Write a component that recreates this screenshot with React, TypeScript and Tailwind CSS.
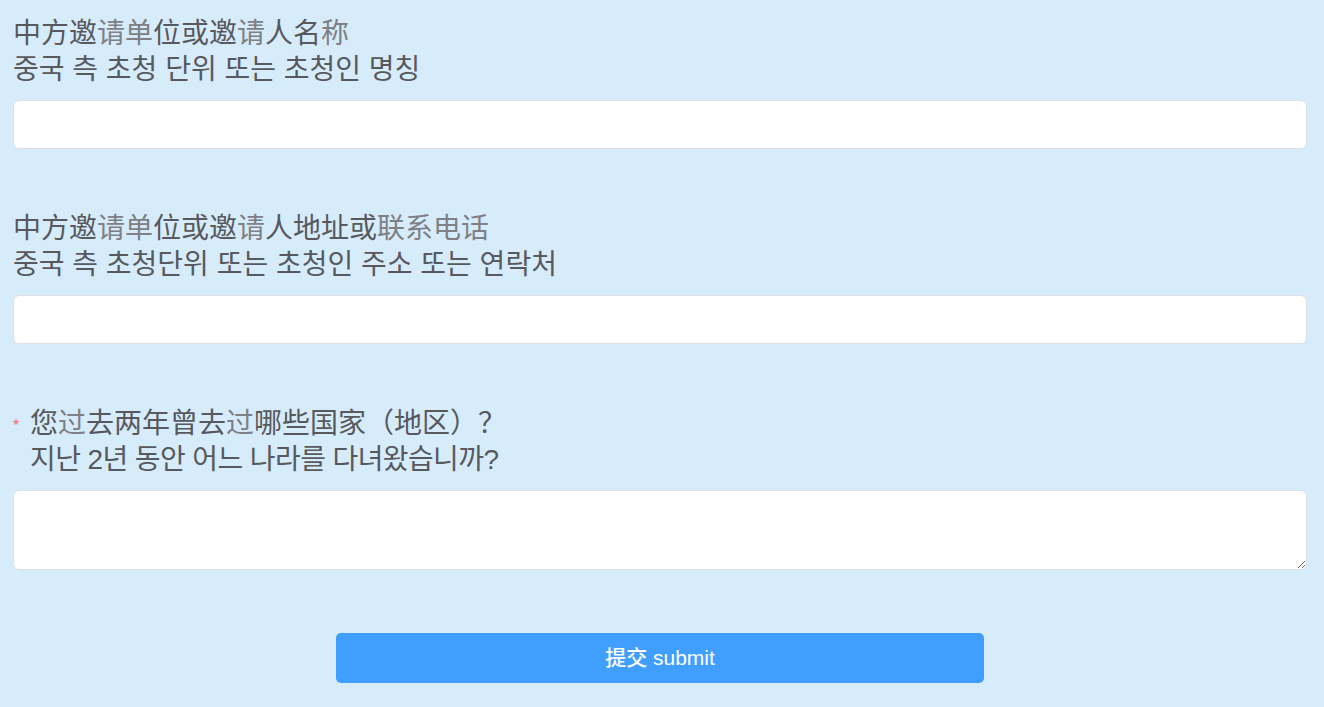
import React from 'react'

const FONT = '"Liberation Sans", "Noto Sans CJK SC", "Noto Sans CJK KR", sans-serif'

// lighter characters in the reference render with a thinner fallback face
function L({ children }: { children: React.ReactNode }) {
  return <span className="text-[#7e8085]">{children}</span>
}

function Field({
  zh,
  ko,
  required,
  multiline,
}: {
  zh: React.ReactNode
  ko: string
  required?: boolean
  multiline?: boolean
}) {
  return (
    <div className="flex flex-col">
      <div className="flex">
        {required && (
          <span className="w-[17px] shrink-0 text-[#f56c6c] text-[16px] leading-[36px] pt-[2px]">*</span>
        )}
        <div className="flex flex-col text-[#58595e] text-[28px] leading-[36px]">
          <div>{zh}</div>
          <div className={required ? 'tracking-[-0.6px]' : ''}>{ko}</div>
        </div>
      </div>
      {multiline ? (
        <textarea className="mt-3 h-[80px] w-full bg-white border border-[#dcdfe6] rounded-[6px] resize-y outline-none" />
      ) : (
        <input className="mt-3 h-[49px] w-full bg-white border border-[#dcdfe6] rounded-[6px] outline-none" />
      )}
    </div>
  )
}

export default function App() {
  return (
    <div className="min-h-screen w-full bg-[#d6ecfa]" style={{ fontFamily: FONT }}>
      <div className="pl-[13px] pr-[17px] pt-[16px] flex flex-col gap-[62px]">
        <Field
          zh={<>中方邀<L>请单</L>位或邀<L>请</L>人名<L>称</L></>}
          ko="중국 측 초청 단위 또는 초청인 명칭"
        />
        <Field
          zh={<>中方邀<L>请单</L>位或邀<L>请</L>人地址或<L>联系电话</L></>}
          ko="중국 측 초청단위 또는 초청인 주소 또는 연락처"
        />
        <Field
          required
          multiline
          zh={<>您<L>过</L>去两年曾去<L>过</L>哪些国家（地区）？</>}
          ko="지난 2년 동안 어느 나라를 다녀왔습니까?"
        />
      </div>
      <div className="flex justify-center pt-[63px] pr-[4px]">
        <button className="w-[648px] h-[50px] rounded-[5px] bg-[#409eff] text-white text-[21px] font-medium">
          提交 submit
        </button>
      </div>
    </div>
  )
}
